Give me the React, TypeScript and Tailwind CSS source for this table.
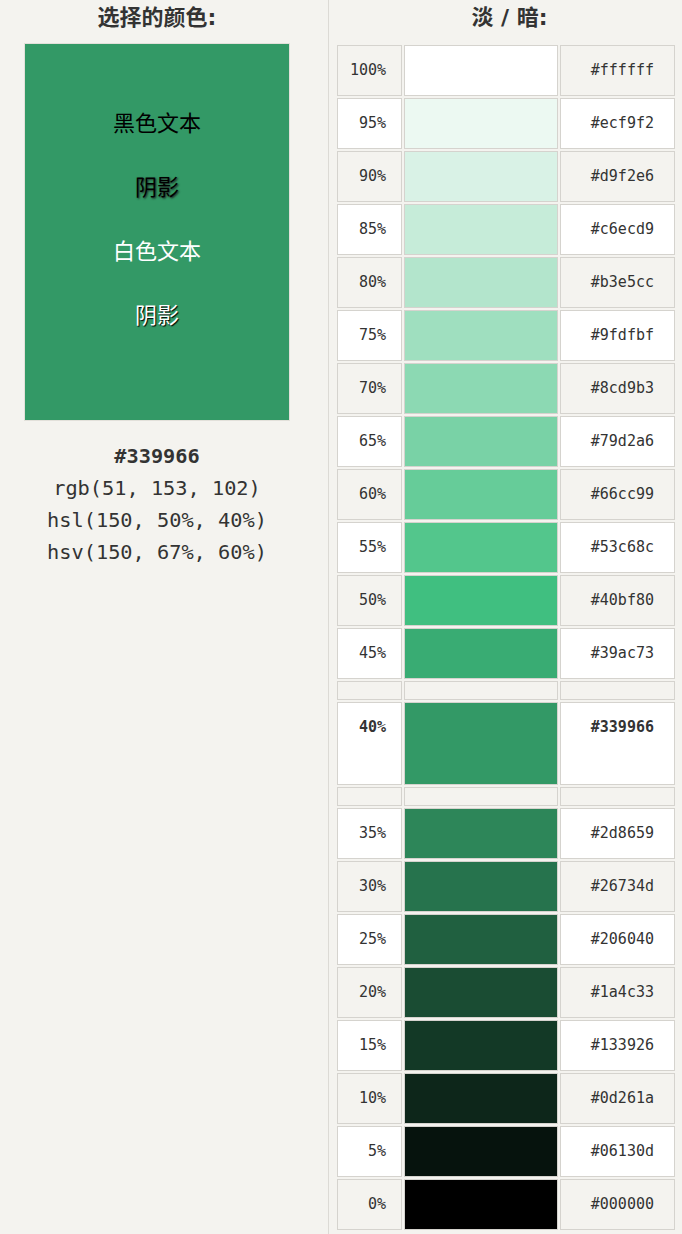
import React from 'react';

type Shade = { pct: number; hex: string };

const lighter: Shade[] = [
  { pct: 100, hex: '#ffffff' },
  { pct: 95, hex: '#ecf9f2' },
  { pct: 90, hex: '#d9f2e6' },
  { pct: 85, hex: '#c6ecd9' },
  { pct: 80, hex: '#b3e5cc' },
  { pct: 75, hex: '#9fdfbf' },
  { pct: 70, hex: '#8cd9b3' },
  { pct: 65, hex: '#79d2a6' },
  { pct: 60, hex: '#66cc99' },
  { pct: 55, hex: '#53c68c' },
  { pct: 50, hex: '#40bf80' },
  { pct: 45, hex: '#39ac73' },
];

const darker: Shade[] = [
  { pct: 35, hex: '#2d8659' },
  { pct: 30, hex: '#26734d' },
  { pct: 25, hex: '#206040' },
  { pct: 20, hex: '#1a4c33' },
  { pct: 15, hex: '#133926' },
  { pct: 10, hex: '#0d261a' },
  { pct: 5, hex: '#06130d' },
  { pct: 0, hex: '#000000' },
];

const cell = 'border border-[#d5d3ce]';
const sans = "font-['DejaVu_Sans','Noto_Sans_CJK_SC',sans-serif]";
const mono = "font-['DejaVu_Sans_Mono','Noto_Sans_CJK_SC',monospace]";

const ShadeRow: React.FC<{ shade: Shade; white: boolean; current?: boolean }> = ({ shade, white, current }) => {
  const bg = white ? 'bg-white' : 'bg-[#f4f3ef]';
  const h = current ? 'h-[83px]' : 'h-[51px]';
  return (
    <>
      <div className={`${cell} ${bg} ${h} pt-[14px] pr-[15px] text-right leading-[20px] ${current ? 'font-bold' : ''}`}>
        {shade.pct}%
      </div>
      <div className={`${cell} ${h}`} style={{ backgroundColor: shade.hex }} />
      <div className={`${cell} ${bg} ${h} pt-[14px] pr-[20px] text-right leading-[20px] ${current ? 'font-bold' : ''}`}>
        {shade.hex}
      </div>
    </>
  );
};

const Spacer: React.FC = () => (
  <>
    <div className={`${cell} h-[19px] bg-[#f4f3ef]`} />
    <div className={`${cell} h-[19px] bg-[#f4f3ef]`} />
    <div className={`${cell} h-[19px] bg-[#f4f3ef]`} />
  </>
);

const App: React.FC = () => {
  return (
    <div className="flex min-h-[1234px] w-[682px] bg-[#f4f3ef] text-[#333]">
      <div className="w-[328px] shrink-0 pl-[24px]">
        <div className="w-[266px]">
          <h2 className={`${sans} h-[43px] pt-[5px] text-center text-[22px] font-bold leading-[26px]`}>选择的颜色:</h2>
          <div className={`${sans} h-[378px] border border-[#e2e0da] bg-[#339966] pt-[48px] text-center text-[22px] leading-[64px]`}>
            <div className="text-black">黑色文本</div>
            <div className="text-black [text-shadow:1px_1px_2px_#222]">阴影</div>
            <div className="text-white">白色文本</div>
            <div className="text-white [text-shadow:1px_1px_1px_#000]">阴影</div>
          </div>
          <div className={`${mono} mt-[19px] text-center text-[20.3px] leading-[32px]`}>
            <div className="font-bold">#339966</div>
            <div>rgb(51, 153, 102)</div>
            <div>hsl(150, 50%, 40%)</div>
            <div>hsv(150, 67%, 60%)</div>
          </div>
        </div>
      </div>

      <div className="w-px shrink-0 bg-[#dcdad5]" />

      <div className="flex-1 pl-[8px]">
        <h2 className={`${sans} h-[45px] pt-[5px] text-center text-[22px] font-bold leading-[26px]`}>淡 / 暗:</h2>
        <div className={`${mono} grid grid-cols-[65px_154px_115px] gap-[2px] text-[15px]`}>
          {lighter.map((s, i) => (
            <ShadeRow key={s.pct} shade={s} white={i % 2 === 1} />
          ))}
          <Spacer />
          <ShadeRow shade={{ pct: 40, hex: '#339966' }} white current />
          <Spacer />
          {darker.map((s, i) => (
            <ShadeRow key={s.pct} shade={s} white={i % 2 === 0} />
          ))}
        </div>
      </div>
    </div>
  );
};

export default App;
